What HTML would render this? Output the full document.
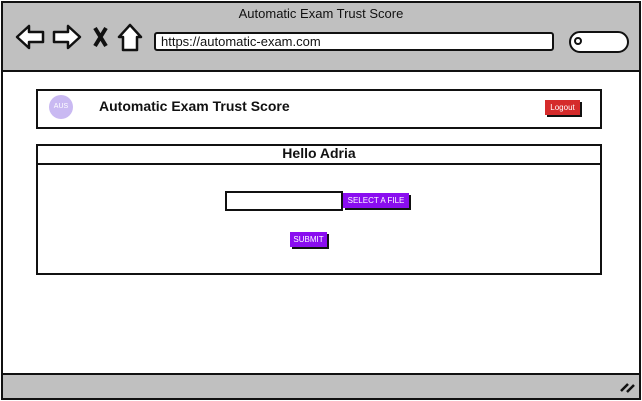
<!DOCTYPE html><html><head><style>
*{margin:0;padding:0;box-sizing:border-box}
body{width:642px;height:401px;overflow:hidden;background:#fff;font-family:"Liberation Sans",sans-serif;position:relative}
.a{position:absolute}
</style></head><body>
<div class="a" style="left:1px;top:1px;width:640px;height:399px;border:2px solid #111;background:#fff"></div>
<div class="a" style="left:3px;top:3px;width:636px;height:69px;background:#c0c0c0;border-bottom:2px solid #111"></div>
<div class="a" style="left:0;top:6px;width:642px;text-align:center;font-size:13px;color:#111">Automatic Exam Trust Score</div>
<svg class="a" style="left:14px;top:22px" width="130" height="32" viewBox="0 0 130 32" fill="#fff" stroke="#111" stroke-width="2.5" stroke-linejoin="round">
<path d="M3 15 L15 4 L15 10 L29 10 L29 20 L15 20 L15 26 Z"/>
<path d="M66 15 L54 4 L54 10 L40 10 L40 20 L54 20 L54 26 Z"/>
<path d="M81 6 L92 24 M92 6 L81 24" stroke-width="4"/>
<path d="M116 3 L105 15 L109 15 L109 28 L123 28 L123 15 L127 15 Z"/>
</svg>
<div class="a" style="left:154px;top:32px;width:400px;height:19px;border:2px solid #111;border-radius:3px;background:#fff;font-size:13px;padding-left:5px;line-height:15px;color:#111">https://automatic-exam.com</div>
<div class="a" style="left:569px;top:31px;width:60px;height:22px;border:2px solid #111;border-radius:11px;background:#fff"></div>
<div class="a" style="left:574px;top:37px;width:8px;height:8px;border:2px solid #111;border-radius:50%"></div>
<div class="a" style="left:3px;top:373px;width:636px;height:25px;background:#c0c0c0;border-top:2px solid #111"></div>
<svg class="a" style="left:618px;top:379px" width="20" height="16"><path d="M3 12 L10 5 M9 13 L16 6" stroke="#111" stroke-width="2.5"/></svg>
<div class="a" style="left:36px;top:89px;width:566px;height:40px;border:2px solid #111"></div>
<div class="a" style="left:49px;top:95px;width:24px;height:24px;border-radius:50%;background:#c9b9f2;color:#fff;font-size:7px;text-align:center;line-height:24px">AUS</div>
<div class="a" style="left:99px;top:98px;font-size:14px;font-weight:bold;color:#111">Automatic Exam Trust Score</div>
<div class="a" style="left:547px;top:102px;width:35px;height:15px;background:#111"></div>
<div class="a" style="left:545px;top:100px;width:35px;height:15px;background:#d52b2b;color:#fff;font-size:8px;text-align:center;line-height:15px">Logout</div>
<div class="a" style="left:36px;top:144px;width:566px;height:131px;border:2px solid #111"></div>
<div class="a" style="left:36px;top:163px;width:566px;height:2px;background:#111"></div>
<div class="a" style="left:36px;top:145px;width:566px;text-align:center;font-size:14px;font-weight:bold;color:#111">Hello Adria</div>
<div class="a" style="left:225px;top:191px;width:118px;height:20px;border:2px solid #111;background:#fff"></div>
<div class="a" style="left:345px;top:195px;width:66px;height:15px;background:#111"></div>
<div class="a" style="left:343px;top:193px;width:66px;height:15px;background:#8a0df0;color:#fff;font-size:8px;text-align:center;line-height:15px">SELECT A FILE</div>
<div class="a" style="left:292px;top:234px;width:37px;height:15px;background:#111"></div>
<div class="a" style="left:290px;top:232px;width:37px;height:15px;background:#8a0df0;color:#fff;font-size:8px;text-align:center;line-height:15px">SUBMIT</div>
</body></html>
